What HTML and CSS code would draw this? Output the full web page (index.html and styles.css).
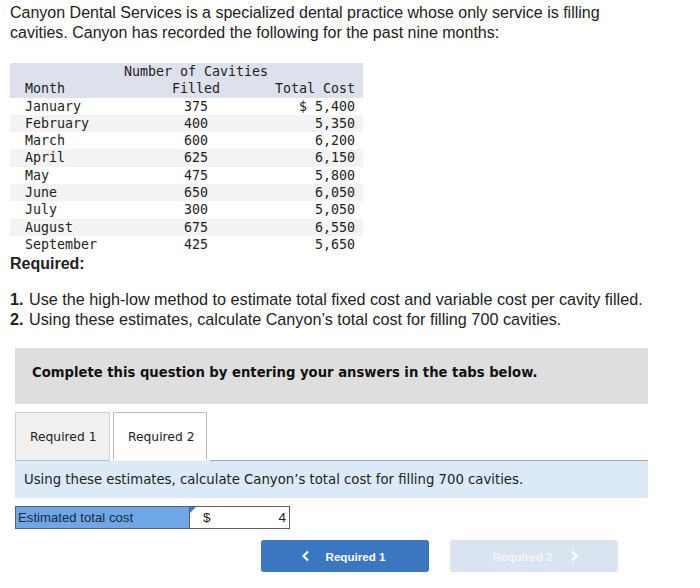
FILE: index.html
```html
<!DOCTYPE html>
<html>
<head>
<meta charset="utf-8">
<link rel="stylesheet" href="styles.css">
</head>
<body>
<div class="page">
  <p class="intro">Canyon Dental Services is a specialized dental practice whose only service is filling cavities. Canyon has recorded the following for the past nine months:</p>
  <table class="data">
    <colgroup><col class="w-month"><col class="w-filled"><col class="w-cost"></colgroup>
    <thead>
      <tr><th class="top" colspan="3">Number of Cavities</th></tr>
      <tr><th class="c-month">Month</th><th class="c-filled">Filled</th><th class="c-cost">Total Cost</th></tr>
    </thead>
    <tbody>
      <tr><td class="c-month">January</td><td class="c-filled">375</td><td class="c-cost">$ 5,400</td></tr>
      <tr><td class="c-month">February</td><td class="c-filled">400</td><td class="c-cost">5,350</td></tr>
      <tr><td class="c-month">March</td><td class="c-filled">600</td><td class="c-cost">6,200</td></tr>
      <tr><td class="c-month">April</td><td class="c-filled">625</td><td class="c-cost">6,150</td></tr>
      <tr><td class="c-month">May</td><td class="c-filled">475</td><td class="c-cost">5,800</td></tr>
      <tr><td class="c-month">June</td><td class="c-filled">650</td><td class="c-cost">6,050</td></tr>
      <tr><td class="c-month">July</td><td class="c-filled">300</td><td class="c-cost">5,050</td></tr>
      <tr><td class="c-month">August</td><td class="c-filled">675</td><td class="c-cost">6,550</td></tr>
      <tr><td class="c-month">September</td><td class="c-filled">425</td><td class="c-cost">5,650</td></tr>
    </tbody>
  </table>
  <div class="required">Required:</div>
  <ol class="reqlist">
    <li><span class="num">1.</span><span>Use the high-low method to estimate total fixed cost and variable cost per cavity filled.</span></li>
    <li><span class="num">2.</span><span>Using these estimates, calculate Canyon’s total cost for filling 700 cavities.</span></li>
  </ol>

  <div class="notice">Complete this question by entering your answers in the tabs below.</div>

  <div class="tabs">
    <div class="tab">Required 1</div>
    <div class="tab active">Required 2</div>
    <div class="tab-fill"></div>
  </div>
  <div class="panel">Using these estimates, calculate Canyon’s total cost for filling 700 cavities.</div>

  <div class="answer">
    <div class="label">Estimated total cost</div>
    <div class="input">
      <span class="marker"></span>
      <span class="dollar">$</span>
      <span class="value">4</span>
    </div>
  </div>

  <div class="nav">
    <button class="btn primary">
      <svg width="9" height="12" viewBox="0 0 9 12"><path d="M7 1.5 L2.5 6 L7 10.5" fill="none" stroke="#fff" stroke-width="2.2"/></svg>
      <span>Required 1</span>
    </button>
    <button class="btn disabled">
      <span>Required 2</span>
      <svg width="9" height="12" viewBox="0 0 9 12"><path d="M2 1.5 L6.5 6 L2 10.5" fill="none" stroke="#fff" stroke-width="2.2"/></svg>
    </button>
  </div>
</div>
</body>
</html>
```

FILE: styles.css
```css
* { box-sizing: border-box; }
body {
  margin: 0;
  background: #fff;
  color: #222;
  font-family: "Liberation Sans", Arial, sans-serif;
}
.page {
  width: 700px;
  padding: 3px 0 0 10px;
}
.intro {
  margin: 0;
  width: 620px;
  font-size: 16px;
  line-height: 20px;
  color: #222;
}
.data {
  margin-top: 20px;
  border-collapse: collapse;
  table-layout: fixed;
  width: 353px;
  font-family: "DejaVu Sans Mono", monospace;
  font-size: 13.3px;
  color: #222;
}
.w-month { width: 138px; }
.w-filled { width: 96px; }
.w-cost { width: 119px; }
.data th, .data td {
  font-weight: normal;
  padding: 0;
  height: 17.3px;
  line-height: 17.3px;
  white-space: nowrap;
}
.data thead tr { background: #dde1eb; }
.data th.top { height: 17px; text-align: center; padding-left: 19px; }
.data tbody tr:nth-child(even) { background: #f3f3f3; }
.data .c-month { text-align: left; padding-left: 15px; }
.data .c-filled { text-align: center; }
.data .c-cost { text-align: right; padding-right: 8px; }
.required {
  font-weight: bold;
  font-size: 16px;
  line-height: 20px;
  margin-top: 1px;
}
.reqlist {
  list-style: none;
  margin: 15px 0 0 0;
  padding: 0;
  font-size: 16.2px;
  line-height: 20px;
}
.reqlist li { display: flex; }
.reqlist .num { font-weight: bold; width: 19px; }
.notice {
  margin: 19px 0 0 5px;
  width: 633px;
  height: 56px;
  background: #dedede;
  padding: 0 0 8px 17px;
  display: flex;
  align-items: center;
  font-family: "DejaVu Sans", Verdana, sans-serif;
  font-weight: bold;
  font-size: 13.2px;
  color: #111;
}
.tabs {
  margin: 8px 0 0 5px;
  width: 633px;
  display: flex;
  gap: 3px;
  height: 49px;
}
.tab {
  width: 95px;
  height: 49px;
  border: 1px solid #cfcfcf;
  border-bottom: 1px solid #b8bcc2;
  background: #f0f0f0;
  font-family: "DejaVu Sans", Verdana, sans-serif;
  font-size: 12.3px;
  color: #222;
  padding-left: 14px;
  display: flex;
  align-items: center;
}
.tab.active {
  width: 94px;
  background: #fff;
  border-color: #bdbdbd;
  border-bottom-color: #fff;
}
.tab-fill {
  flex: 1;
  border-bottom: 1px solid #9fa7b0;
}
.panel {
  margin-left: 5px;
  width: 633px;
  height: 37px;
  background: #dce9f7;
  padding-left: 9px;
  display: flex;
  align-items: center;
  font-family: "DejaVu Sans", Verdana, sans-serif;
  font-size: 13.25px;
  color: #222;
}
.answer {
  margin: 8px 0 0 5px;
  width: 275px;
  height: 23px;
  display: flex;
  border: 1px solid #5c5f66;
}
.answer .label {
  width: 174px;
  background: #6fa6e6;
  font-family: "Liberation Sans", Arial, sans-serif;
  font-size: 13.2px;
  color: #1c2a3a;
  padding-left: 2px;
  display: flex;
  align-items: center;
  border-right: 1px solid #5c5f66;
}
.answer .input {
  position: relative;
  flex: 1;
  background: #fff;
  display: flex;
  align-items: center;
  justify-content: space-between;
  padding: 0 3px 0 13px;
  font-size: 13.5px;
  color: #222;
}
.marker {
  position: absolute;
  left: 0;
  top: 0;
  width: 0;
  height: 0;
  border-top: 6px solid #3c7bd0;
  border-right: 6px solid transparent;
}
.nav {
  margin: 11px 0 0 251px;
  display: flex;
  gap: 21px;
}
.btn {
  width: 168px;
  height: 32px;
  border: none;
  border-radius: 3px;
  display: flex;
  align-items: center;
  justify-content: center;
  gap: 16px;
  font-family: "Liberation Sans", Arial, sans-serif;
  font-weight: bold;
  font-size: 11.6px;
  color: #fff;
  padding: 0;
}
.btn.primary { background: #3a77c0; padding-right: 4px; }
.btn.disabled { background: #d9e4f0; color: #f4f7fb; gap: 18px; padding-left: 4px; }
```
